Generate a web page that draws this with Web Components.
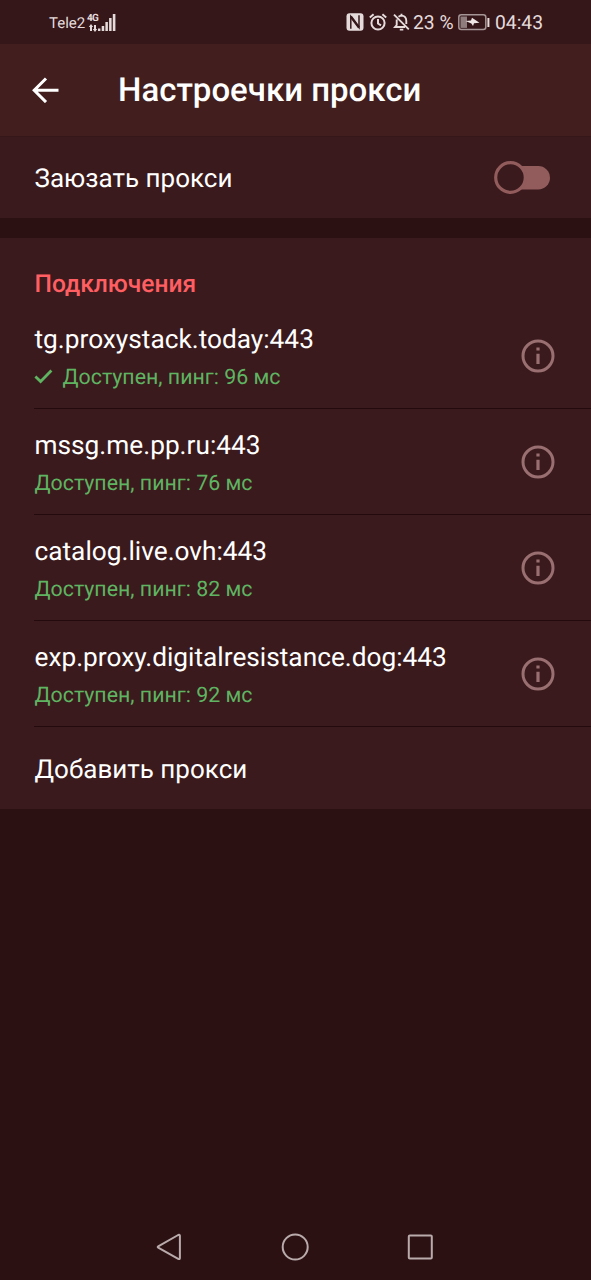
<!DOCTYPE html>
<html lang="ru">
<head>
<meta charset="utf-8">
<title>Настроечки прокси</title>
<style>
html,body{margin:0;height:100%;background:#2c1113}
body{font-family:Roboto,"Noto Sans",sans-serif;color:#fff;overflow:hidden;text-rendering:geometricPrecision}
</style>
</head>
<body>
<proxy-screen></proxy-screen>
<script>
function define(name, html) {
  const template = document.createElement('template');
  template.innerHTML = html;
  customElements.define(name, class extends HTMLElement {
    constructor() {
      super();
      this.attachShadow({mode: 'open'}).append(template.content.cloneNode(true));
    }
  });
}

define('status-bar', `
<style>
:host{display:flex;align-items:center;height:44px;box-sizing:border-box;padding:1px 48px 0 49px;background:#35171a;color:#e6dbdb;line-height:24px;white-space:nowrap}
svg{display:block;flex:none}
.carrier{font-size:15px;width:38px}
.net{display:flex;flex-direction:column;align-items:center;width:11px;font-size:10px;line-height:10px;font-weight:700;letter-spacing:-.9px;height:18px}
.grow{flex:1}
.pct{width:46px;font-size:19.3px;padding-top:1px}
.time{width:48px;font-size:19.3px;padding-top:1px}
</style>
<span class="carrier">Tele2</span>
<span class="net"><span>4G</span><svg width="10" height="8" viewBox="0 0 10 8" fill="currentColor"><path d="M3 0 5.2 3H4V7H2V3H.8zM6 1H8V5H9.2L7 8 4.8 5H6z"/></svg></span>
<svg width="18" height="18" viewBox="0 0 18 18" fill="currentColor"><path d="M0 14.5h2.4V17H0zM3.7 12h2.5v5H3.7zM7.4 8h2.5v9H7.4zM11.1 4h2.5v13h-2.5zM14.8 0h2.6v17h-2.6z"/></svg>
<span class="grow"></span>
<svg width="18" height="18" viewBox="0 0 18 18" style="margin:-1px 5px 0 0"><rect x=".5" y=".3" width="17" height="17.4" rx="3" fill="#e6dbdb"/><path d="M4.8 15.8V3.6L13 14.4V2.2" fill="none" stroke="#35171a" stroke-width="1.5"/><path d="M4.8 3.6 13 14.4" stroke="#35171a" stroke-width="2.4"/></svg>
<svg width="18" height="18" viewBox="0 0 18 18" fill="none" stroke="currentColor" stroke-width="2" style="margin:-1px 6px 0 0"><circle cx="9" cy="10" r="6.6"/><path d="M9 6v4.5l3 1.8M.8 4.4 4.6 1.2M17.2 4.4 13.4 1.2"/></svg>
<svg width="17" height="18" viewBox="0 0 17 18" fill="none" stroke="currentColor" stroke-width="1.9" style="margin:-1px 3px 0 0"><path d="M1 1.6 15.8 16.4M3.7 6.5V12L2 14H12M5.5 3.8Q7.4 2.6 8.5 2.6 13.3 2.8 13.3 8V11M8.5 2.8V.7M6.8 16.6h3.5"/></svg>
<span class="pct">23 %</span>
<svg width="32" height="17" viewBox="0 0 32 17" style="margin:0 5px 0 -1px"><rect x=".8" y=".8" width="27" height="14.8" rx="2.5" fill="none" stroke="#a59595" stroke-width="1.5"/><path d="M2.5 2.5H9v11.4H2.5z" fill="#8f7c7d"/><path d="M7.5 7 13 6.6 14 3.8 21.5 8.8 16 9.2 15 12 13.4 9.6z" fill="#eee5e5"/><path d="M29.4 4h2v9h-2z" fill="#e6dbdb"/></svg>
<span class="time">04:43</span>`);

define('app-bar', `
<style>
:host{display:flex;align-items:center;height:92px;box-sizing:border-box;padding-left:32px;background:#421e1e}
svg{width:27px;height:26px;margin-right:59px}
h1{margin:2px 0 0;font-size:33px;line-height:40px;font-weight:500;white-space:nowrap}
</style>
<svg viewBox="0 0 27 26" fill="none" stroke="#fff" stroke-width="3"><path d="M26.5 13.3H2.5M14 1.5 2.2 13.3 14 25.1"/></svg>
<h1><slot></slot></h1>`);

define('toggle-row', `
<style>
:host{display:flex;align-items:center;justify-content:space-between;height:82px;box-sizing:border-box;padding:1px 40px 0 34.5px;font-size:26px;background:#3a1a1c;box-shadow:inset 0 1px #35171a;margin-bottom:20px}
span{padding-top:2px}
svg{width:57px;height:34px}
</style>
<span><slot></slot></span>
<svg viewBox="0 0 57 34"><rect x="14" y="5" width="42" height="23.5" rx="11.75" fill="#925b5c"/><circle cx="16.5" cy="16.5" r="14.8" fill="#3a1a1c" stroke="#925b5c" stroke-width="3.2"/></svg>`);

define('list-section', `
<style>
:host{display:block;background:#3a1a1c;padding-top:31px}
h2{margin:0 0 2px 34.5px;font-size:24.6px;line-height:32px;font-weight:500;color:#ff5e62}
</style>
<h2><slot name="heading"></slot></h2>
<slot></slot>`);

define('check-mark', `
<style>:host{display:inline-block;width:28px}svg{display:block;margin:-3px 0 0 -1px}</style>
<svg width="19" height="15" viewBox="0 0 19 15" fill="none" stroke="#5fb462" stroke-width="2.8"><path d="M1.4 7.4 6.6 12.5 17.4 1.6"/></svg>`);

define('proxy-row', `
<style>
:host{display:flex;height:106px;box-sizing:border-box;margin-left:34px;padding:20px 36px 0 0;border-bottom:1px solid #220a0d;white-space:nowrap}
.text{flex:1;padding:1px 0 0 .5px}
.name{font-size:26.25px;line-height:32px}
.state{display:flex;align-items:center;margin-top:9px;font-size:21.35px;line-height:26px;color:#5fb462}
svg{width:34px;height:34px;margin-top:16px}
</style>
<div class="text"><div class="name"><slot></slot></div><div class="state"><slot name="mark"></slot><slot name="state"></slot></div></div>
<svg viewBox="0 0 34 34"><circle cx="17" cy="17" r="15" fill="none" stroke="#996f72" stroke-width="3"/><path d="M15.4 8.5h3.2v3h-3.2zM15.4 14.7h3.2v10.2h-3.2z" fill="#996f72"/></svg>`);

define('action-row', `
<style>:host{display:flex;align-items:center;height:82px;box-sizing:border-box;padding:3px 34.5px 0;font-size:26px}</style>
<slot></slot>`);

define('nav-bar', `
<style>
:host{display:flex;align-items:center;justify-content:space-between;height:66px;margin-top:auto;padding:0 157px 0 156px}
svg{width:28px;height:30px}
</style>
<svg viewBox="0 0 28 30" fill="none" stroke="#b9abab" stroke-width="2" stroke-linejoin="round"><path d="M2.2 14.4 22.2 3Q23.9 2.2 23.9 3.8V26Q23.9 27.6 22.2 26.8L2.2 15.6Q1.2 15 2.2 14.4z"/></svg>
<svg viewBox="0 0 28 30" fill="none" stroke="#b9abab" stroke-width="2"><circle cx="14.2" cy="15" r="12.5"/></svg>
<svg viewBox="0 0 28 30" fill="none" stroke="#b9abab" stroke-width="2"><rect x="2.8" y="3.6" width="23" height="23" rx="1"/></svg>`);

define('proxy-screen', `
<style>:host{display:flex;flex-direction:column;height:1280px;background:#2c1113}</style>
<status-bar></status-bar>
<app-bar>Настроечки прокси</app-bar>
<toggle-row>Заюзать прокси</toggle-row>
<list-section>
<span slot="heading">Подключения</span>
<proxy-row>tg.proxystack.today:443<check-mark slot="mark"></check-mark><span slot="state">Доступен, пинг: 96 мс</span></proxy-row>
<proxy-row>mssg.me.pp.ru:443<span slot="state">Доступен, пинг: 76 мс</span></proxy-row>
<proxy-row>catalog.live.ovh:443<span slot="state">Доступен, пинг: 82 мс</span></proxy-row>
<proxy-row>exp.proxy.digitalresistance.dog:443<span slot="state">Доступен, пинг: 92 мс</span></proxy-row>
<action-row>Добавить прокси</action-row>
</list-section>
<nav-bar></nav-bar>`);
</script>
</body>
</html>
